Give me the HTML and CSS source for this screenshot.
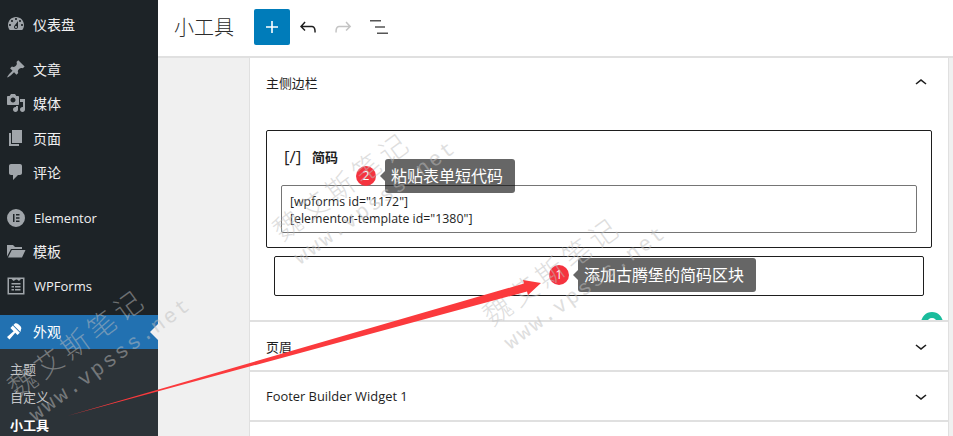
FILE: index.html
```html
<!DOCTYPE html>
<html lang="zh-CN">
<head>
  <meta charset="UTF-8">
  <title>小工具</title>
  <link rel="stylesheet" href="styles.css">
</head>
<body>
  <div class="shell">
    <nav class="sidebar">
      <ul class="menu">
        <li class="menu-item"><svg class="icon" viewBox="0 0 20 20"><path fill-rule="evenodd" d="M3.76 16h12.48c1.1-1.37 1.76-3.11 1.76-5 0-4.42-3.58-8-8-8s-8 3.58-8 8c0 1.89.66 3.63 1.76 5zM10 4c.55 0 1 .45 1 1s-.45 1-1 1-1-.45-1-1 .45-1 1-1zM6 6c.55 0 1 .45 1 1s-.45 1-1 1-1-.45-1-1 .45-1 1-1zm8 0c.55 0 1 .45 1 1s-.45 1-1 1-1-.45-1-1 .45-1 1-1zm-5.37 5.55L12 7v6c0 1.1-.9 2-2 2s-2-.9-2-2c0-.57.24-1.08.63-1.45zM4 10c.55 0 1 .45 1 1s-.45 1-1 1-1-.45-1-1 .45-1 1-1zm12 0c.55 0 1 .45 1 1s-.45 1-1 1-1-.45-1-1 .45-1 1-1zm-5 3c0-.55-.45-1-1-1s-1 .45-1 1 .45 1 1 1 1-.45 1-1z"/></svg>仪表盘</li>
        <li class="menu-item sep"><svg class="icon" viewBox="0 0 20 20"><path d="M10.44 3.02l1.82-1.82 6.36 6.35-1.83 1.82c-1.05-.68-2.48-.57-3.41.36l-.75.75c-.92.93-1.04 2.35-.35 3.41l-1.83 1.82-2.41-2.41-2.8 2.79c-.42.42-3.38 2.71-3.8 2.29s1.86-3.39 2.28-3.81l2.79-2.79L4.1 9.36l1.83-1.82c1.05.69 2.48.57 3.4-.36l.75-.75c.93-.92 1.05-2.35.36-3.41z"/></svg>文章</li>
        <li class="menu-item"><svg class="icon" viewBox="0 0 20 20"><path fill-rule="evenodd" d="M13 11V4c0-.55-.45-1-1-1h-1.67L9 1H5L3.67 3H2c-.55 0-1 .45-1 1v7c0 .55.45 1 1 1h10c.55 0 1-.45 1-1zM7 4.5c1.38 0 2.5 1.12 2.5 2.5S8.38 9.5 7 9.5 4.5 8.38 4.5 7 5.62 4.5 7 4.5zM14 6h5v10.5c0 1.38-1.12 2.5-2.5 2.5S14 17.88 14 16.5s1.12-2.5 2.5-2.5c.17 0 .34.02.5.05V9h-3V6zm-4 8.05V13h2v3.5c0 1.38-1.12 2.5-2.5 2.5S7 17.88 7 16.5 8.12 14 9.5 14c.17 0 .34.02.5.05z"/></svg>媒体</li>
        <li class="menu-item"><svg class="icon" viewBox="0 0 20 20"><path d="M6 15V2h10v13H6zm-1 1h8v2H3V5h2v11z"/></svg>页面</li>
        <li class="menu-item"><svg class="icon" viewBox="0 0 20 20"><path d="M5 2h9c1.1 0 2 .9 2 2v7c0 1.1-.9 2-2 2h-2l-5 5v-5H5c-1.1 0-2-.9-2-2V4c0-1.1.9-2 2-2z"/></svg>评论</li>
        <li class="menu-item sep latin"><svg class="icon" viewBox="0 0 20 20"><path fill-rule="evenodd" d="M10 1a9 9 0 1 0 0 18 9 9 0 0 0 0-18zM7 6h1.5v8H7zM10 6h3.5v1.5H10zM10 9.2h3.5v1.5H10zM10 12.500h3.500V14H10z"/></svg>Elementor</li>
        <li class="menu-item"><svg class="icon" viewBox="0 0 20 20"><path d="M1 4h6l2 2h7v2H5L1 15.500V4zM5.800 9H19.500l-3.500 7.500H2z"/></svg>模板</li>
        <li class="menu-item latin"><svg class="icon" viewBox="0 0 20 20"><path fill-rule="evenodd" d="M1.500 1.500h17V18.500h-17zM3 3v14h14V3h-2l-2 2-2-1.500h-1L7.500 5l-2-2zM5.500 7h9v1.500h-9zM5.500 10h2.500v1.500H5.500zM9 10h5.500v1.500H9zM5.500 13h2.500v1.500H5.500zM9 13h5.500v1.500H9z"/></svg>WPForms</li>
        <li class="menu-item current"><svg class="icon" viewBox="0 0 20 20"><path d="M14.480 11.060L7.410 3.990l1.500-1.500c.5-.56 2.300-.47 3.450.68l1.950 1.950c1.160 1.160 1.270 2.950.68 3.450zM6.770 4.600l7.070 7.070-2.400 2.400-2.200-2.200-5.740 6.630L1 16l6.600-5.700L4.400 7z"/></svg>外观</li>
      </ul>
      <ul class="submenu">
        <li>主题</li>
        <li>自定义</li>
        <li class="on">小工具</li>
      </ul>
    </nav>

    <main class="main">
      <header class="topbar">
        <h1>小工具</h1>
        <button class="add-btn"><svg viewBox="0 0 24 24"><path d="M18 11.200h-5.200V6h-1.600v5.200H6v1.600h5.200V18h1.600v-5.200H18z"/></svg></button>
        <svg class="tool undo" viewBox="0 0 24 24"><path d="M18.300 11.700c-.6-.6-1.400-.9-2.300-.9H6.700l2.900-3.300-1.100-1-4.500 5L8.500 16l1-1-2.700-2.700H16c.5 0 .9.2 1.300.5 1 1 1 3.400 1 4.500v.3h1.500v-.2c0-1.500 0-4.300-1.500-5.700z"/></svg>
        <svg class="tool redo" viewBox="0 0 24 24"><path d="M15.600 6.500l-1.100 1 2.900 3.300H8c-.9 0-1.700.3-2.300.9-1.400 1.500-1.400 4.200-1.400 5.600v.2h1.500v-.3c0-1.100 0-3.500 1-4.500.3-.3.7-.5 1.300-.5h9.200L14.500 15l1.100 1.100 4.600-4.600-4.600-5z"/></svg>
        <svg class="tool list" viewBox="0 0 24 24"><path d="M3 5h11v1.500H3zM8 11.200h10v1.500H8zM10 17.500h11V19H10z"/></svg>
      </header>

      <div class="panel">
        <section class="area open">
          <div class="area-head">
            <span>主侧边栏</span>
            <svg class="chevron" viewBox="0 0 24 24"><path d="M6.500 12.400L12 8l5.500 4.400-.9 1.200L12 10l-4.500 3.600-1-1.200z"/></svg>
          </div>
          <div class="block">
            <div class="block-title"><span class="block-icon">[/]</span>简码</div>
            <div class="code-box">[wpforms id="1172"]<br>[elementor-template id="1380"]</div>
          </div>
          <div class="inserter"></div>
          <div class="help"></div>
        </section>
        <section class="area">
          <div class="area-head">
            <span>页眉</span>
            <svg class="chevron" viewBox="0 0 24 24"><path d="M17.500 11.600L12 16l-5.500-4.400.9-1.200L12 14l4.500-3.600 1 1.200z"/></svg>
          </div>
        </section>
        <section class="area">
          <div class="area-head">
            <span>Footer Builder Widget 1</span>
            <svg class="chevron" viewBox="0 0 24 24"><path d="M17.500 11.600L12 16l-5.500-4.400.9-1.200L12 14l4.500-3.600 1 1.200z"/></svg>
          </div>
        </section>
      </div>
    </main>

    <div class="note note-2"><b class="badge">2</b><span class="tip">粘贴表单短代码</span></div>
    <div class="note note-1"><b class="badge">1</b><span class="tip">添加古腾堡的简码区块</span></div>

    <div class="wm wm-a"><span>魏艾斯笔记</span><span class="wm-url">www.vpsss.net</span></div>
    <div class="wm wm-b"><span>魏艾斯笔记</span><span class="wm-url">www.vpsss.net</span></div>
    <div class="wm wm-c"><span>魏艾斯笔记</span><span class="wm-url">www.vpsss.net</span></div>

    <svg class="arrow" viewBox="0 0 953 436"><polygon points="67,416 524,283.500 523,280 541,283 528,295 527,291.500"/></svg>
  </div>
</body>
</html>
```

FILE: styles.css
```css
* {
  box-sizing: border-box;
}
body {
  margin: 0;
  font-family: "Open Sans", "Noto Sans CJK SC", sans-serif;
  font-size: 13px;
  color: #1e1e1e;
  background-color: #f0f0f0;
}
ul {
  list-style: none;
  margin: 0;
  padding: 0;
}
.shell {
  position: relative;
  display: flex;
  height: 436px;
  overflow: hidden;
}

/* admin sidebar */
.sidebar {
  position: relative;
  flex: 0 0 158px;
  background-color: #1d2327;
  overflow: hidden;
}
.menu {
  padding-top: 8px;
}
.menu-item {
  position: relative;
  display: flex;
  align-items: center;
  gap: 7px;
  height: 34.2px;
  padding: 0 0 2px 6px;
  font-size: 14px;
  color: #f0f0f1;
}
.menu-item.latin {
  gap: 8px;
  padding-bottom: 0;
  font-size: 13px;
}
.menu-item.sep {
  margin-top: 11px;
}
.menu-item.current {
  margin-top: 11.400px;
  padding-bottom: 1px;
  background-color: #2271b1;
  color: #fff;
}
.menu-item.current::after {
  content: "";
  position: absolute;
  right: 0;
  top: 9px;
  border: 8px solid transparent;
  border-right-color: #f0f0f1;
  border-left-width: 0;
}
.icon {
  width: 20px;
  height: 20px;
  fill: #a0a5aa;
}
.current .icon {
  fill: #fff;
}
.submenu {
  height: 90px;
  padding-top: 6px;
  background-color: #2c3338;
}
.submenu li {
  height: 28px;
  line-height: 28px;
  padding-left: 10px;
  color: #c3c4c7;
}
.submenu li.on {
  color: #fff;
  font-weight: 700;
}

/* main column */
.main {
  flex: 1;
  min-width: 0;
}
.topbar {
  display: flex;
  align-items: center;
  height: 58px;
  padding: 0 0 2px 16px;
  background-color: #fff;
  border-bottom: 2px solid #e0e0e0;
}
.topbar h1 {
  width: 60px;
  margin: 0 20px 2px 0;
  font-size: 20px;
  font-weight: 300;
  color: #2c2c2c;
  white-space: nowrap;
}
.add-btn {
  width: 36px;
  height: 36px;
  padding: 0;
  border: none;
  border-radius: 2px;
  background-color: #007cba;
}
.add-btn svg {
  display: block;
  width: 24px;
  height: 24px;
  margin: 6px;
  fill: #fff;
}
.tool {
  width: 24px;
  height: 24px;
  margin-left: 6px;
  fill: #1e1e1e;
}
.tool.redo {
  margin-left: 11px;
  fill: #c4c4c4;
}
.tool.list {
  margin-left: 12px;
  fill: #555;
}
.panel {
  width: 700px;
  height: 378px;
  margin-left: 91px;
  background-color: #fff;
  border-left: 1px solid #e0e0e0;
  border-right: 1px solid #e0e0e0;
}
.area {
  border-bottom: 2px solid #e0e0e0;
}
.area.open {
  position: relative;
  height: 264px;
  overflow: hidden;
}
.area-head {
  display: flex;
  align-items: center;
  justify-content: space-between;
  height: 48px;
  padding: 0 16px;
  font-size: 12.9px;
}
.area.open .area-head {
  height: 52px;
  padding-bottom: 3px;
}
.chevron {
  width: 24px;
  height: 24px;
  margin-right: -1px;
  fill: #1e1e1e;
}
.block {
  height: 118px;
  margin: 20px 16px 0;
  padding: 13px 14px 0;
  border: 1px solid #1e1e1e;
  border-radius: 2px;
}
.block-title {
  display: flex;
  align-items: center;
  height: 24px;
  margin-bottom: 17px;
  font-weight: 700;
}
.block-icon {
  width: 31px;
  padding-left: 3px;
  font-size: 17px;
  font-weight: 400;
}
.code-box {
  height: 48px;
  padding: 7px 8px;
  border: 1px solid #757575;
  border-radius: 2px;
  font-size: 12.35px;
  line-height: 17px;
}
.inserter {
  height: 40px;
  margin: 8px 24px 0;
  border: 1px solid #1e1e1e;
  border-radius: 2px;
}
.help {
  position: absolute;
  right: 5px;
  bottom: -14px;
  width: 22px;
  height: 22px;
  border: 6px solid #1abc9c;
  border-radius: 50%;
  background-color: #fff;
}

/* tutorial callouts drawn over the screenshot */
.note {
  position: absolute;
  z-index: 1;
  display: flex;
  align-items: center;
  height: 34px;
}
.note-2 {
  left: 356px;
  top: 159px;
}
.note-1 {
  left: 549px;
  top: 258px;
}
.badge {
  width: 20px;
  height: 20px;
  border-radius: 50%;
  background-color: #f5333f;
  color: #fff;
  font-size: 12px;
  font-weight: 400;
  line-height: 20px;
  text-align: center;
}
.tip {
  position: relative;
  height: 34px;
  margin-left: 9px;
  padding: 0 12px 0 6px;
  border-radius: 3px;
  background-color: rgba(0, 0, 0, 0.6);
  color: #fff;
  font-size: 16px;
  line-height: 34px;
  white-space: nowrap;
}
.tip::before {
  content: "";
  position: absolute;
  left: -5px;
  top: 12px;
  border: 5px solid transparent;
  border-right-color: rgba(0, 0, 0, 0.6);
  border-left-width: 0;
}

/* watermark */
.wm {
  position: absolute;
  z-index: 2;
  display: flex;
  flex-direction: column;
  transform: rotate(-36deg);
  transform-origin: 0 0;
  font-size: 28px;
  font-weight: 300;
  line-height: 30px;
  letter-spacing: 4.500px;
  white-space: nowrap;
  color: rgba(190, 190, 190, 0.5);
}
.wm-url {
  margin-top: 5px;
  margin-left: 1px;
  font-family: "Liberation Mono", monospace;
  font-size: 21px;
  letter-spacing: 2.400px;
}
.wm-a {
  left: 2px;
  top: 378px;
}
.wm-b {
  left: 267px;
  top: 221px;
}
.wm-c {
  left: 477px;
  top: 306px;
}

.arrow {
  position: absolute;
  z-index: 4;
  left: 0;
  top: 0;
  width: 953px;
  height: 436px;
  fill: #fb3a3d;
}
```
